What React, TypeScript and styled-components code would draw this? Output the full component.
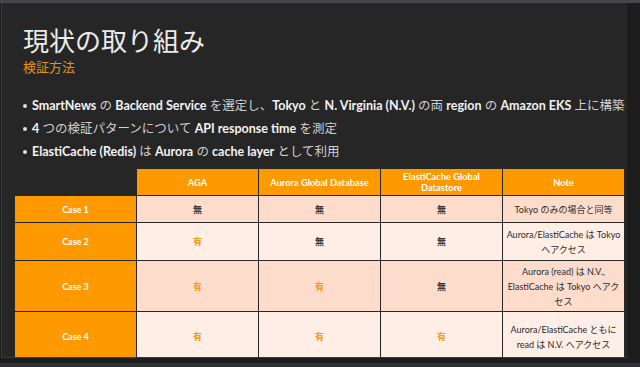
import styled, { createGlobalStyle } from 'styled-components';

const GlobalStyle = createGlobalStyle`
  html, body {
    margin: 0;
    padding: 0;
    background: #1d1d1d;
  }
  body {
    font-family: Lato, 'Noto Sans CJK JP', sans-serif;
  }
`;

const Screen = styled.div`
  width: 640px;
  height: 367px;
  display: flex;
  flex-direction: column;
  background: #1d1d1d;
  overflow: hidden;
`;

const TopEdge = styled.div`
  height: 3px;
  flex: none;
  background: #45484b;
`;

const Slide = styled.div`
  width: 626px;
  height: 355px;
  flex: none;
  margin-left: 1px;
  border-left: 1px solid #3a3a3a;
  border-bottom: 1px solid #3a3a3a;
  background: #262626;
  display: flex;
  flex-direction: column;
  padding: 20px 0 0 21px;
  box-sizing: border-box;
  overflow: hidden;
`;

const BottomEdge = styled.div`
  margin-top: auto;
  height: 4px;
  background: #2e3134;
`;

const Title = styled.h1`
  margin: 0;
  font-family: 'Noto Sans CJK JP', sans-serif;
  font-weight: 400;
  font-size: 26px;
  line-height: 34px;
  color: #ebebeb;
`;

const Subtitle = styled.h2`
  margin: 1px 0 0;
  font-family: 'Noto Sans CJK JP', sans-serif;
  font-weight: 400;
  font-size: 13px;
  line-height: 18px;
  color: #e8920c;
`;

const Bullets = styled.ul`
  margin: 21px 0 0;
  padding: 0;
  list-style: none;
  display: flex;
  flex-direction: column;
  gap: 5px;
`;

const Bullet = styled.li`
  display: flex;
  align-items: center;
  gap: 5px;
  font-size: 12.5px;
  line-height: 18px;
  color: #cfcfcf;
  white-space: nowrap;

  &::before {
    content: '';
    width: 4px;
    height: 4px;
    border-radius: 50%;
    background: #e0e0e0;
    flex: none;
  }
`;

const En = styled.b`
  font-weight: 700;
  color: #f2f2f2;
`;

const Table = styled.div`
  margin: 8px 0 0 -8px;
  display: grid;
  grid-template-columns: repeat(5, 121px);
  grid-template-rows: 26px 26px 37px 50px 49px;
  gap: 1px;
`;

const Cell = styled.div<{ $kind: 'empty' | 'head' | 'label' | 'dark' | 'light' }>`
  display: flex;
  align-items: center;
  justify-content: center;
  text-align: center;
  padding: 0 2px;
  font-size: 9px;
  line-height: 15px;
  box-sizing: border-box;
  background: ${({ $kind }) =>
    $kind === 'empty'
      ? '#262626'
      : $kind === 'head' || $kind === 'label'
        ? '#ff9900'
        : $kind === 'dark'
          ? '#fddccb'
          : '#feeee6'};
  color: ${({ $kind }) => ($kind === 'head' || $kind === 'label' ? '#ffffff' : '#2b2b2b')};
  font-weight: ${({ $kind }) => ($kind === 'head' || $kind === 'label' ? 700 : 400)};
`;

const HeadText = styled.span`
  font-size: 9.3px;
  line-height: 11px;
  white-space: pre-line;
`;

const Mark = styled.span<{ $on: boolean }>`
  font-family: 'Noto Sans CJK JP', sans-serif;
  font-weight: 700;
  color: ${({ $on }) => ($on ? '#ff9900' : '#3a3a3a')};
`;

const headers = ['AGA', 'Aurora Global Database', 'ElastiCache Global\nDatastore', 'Note'];

const cases = [
  { name: 'Case 1', marks: [false, false, false], note: 'Tokyo のみの場合と同等' },
  { name: 'Case 2', marks: [true, false, false], note: 'Aurora/ElastiCache は Tokyo へアクセス' },
  { name: 'Case 3', marks: [true, true, false], note: 'Aurora (read) は N.V., ElastiCache は Tokyo へアクセス' },
  { name: 'Case 4', marks: [true, true, true], note: 'Aurora/ElastiCache ともに read は N.V. へアクセス' },
];

export default function App() {
  return (
    <Screen>
      <GlobalStyle />
      <TopEdge />
      <Slide>
        <Title>現状の取り組み</Title>
        <Subtitle>検証方法</Subtitle>
        <Bullets>
          <Bullet>
            <span>
              <En>SmartNews</En> の <En>Backend Service</En> を選定し、<En>Tokyo</En> と{' '}
              <En>N. Virginia (N.V.)</En> の両 <En>region</En> の <En>Amazon EKS</En> 上に構築
            </span>
          </Bullet>
          <Bullet>
            <span>
              <En>4</En> つの検証パターンについて <En>API response time</En> を測定
            </span>
          </Bullet>
          <Bullet>
            <span>
              <En>ElastiCache (Redis)</En> は <En>Aurora</En> の <En>cache layer</En> として利用
            </span>
          </Bullet>
        </Bullets>
        <Table>
          <Cell $kind="empty" />
          {headers.map((h) => (
            <Cell key={h} $kind="head">
              <HeadText>{h}</HeadText>
            </Cell>
          ))}
          {cases.map((c, i) => {
            const tone = i % 2 === 0 ? 'dark' : 'light';
            return [
              <Cell key={c.name} $kind="label">
                {c.name}
              </Cell>,
              ...c.marks.map((m, j) => (
                <Cell key={c.name + j} $kind={tone}>
                  <Mark $on={m}>{m ? '有' : '無'}</Mark>
                </Cell>
              )),
              <Cell key={c.name + 'note'} $kind={tone}>
                {c.note}
              </Cell>,
            ];
          })}
        </Table>
      </Slide>
      <BottomEdge />
    </Screen>
  );
}
